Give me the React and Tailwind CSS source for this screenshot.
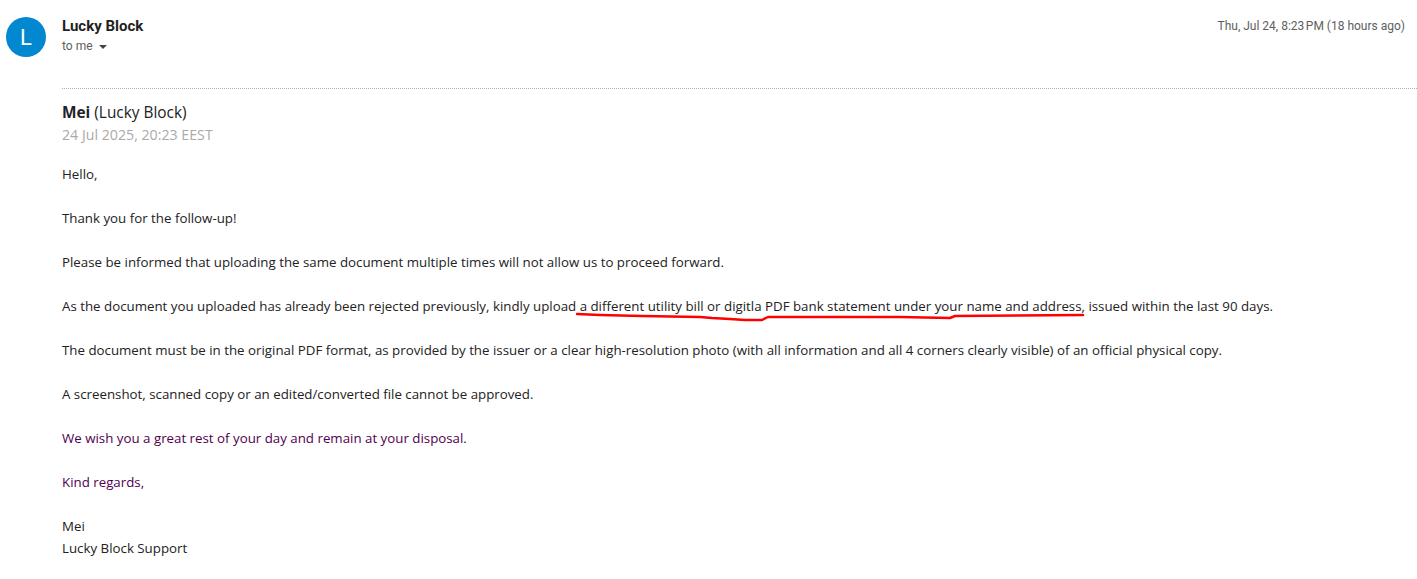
import React from "react";

export default function App() {
  const body = "font-['Open_Sans','Noto_Sans',sans-serif]";
  return (
    <div className="w-[1417px] h-[579px] bg-white overflow-hidden relative">
      <div className="flex pl-[6px] pr-[12px] pt-[17px]">
        <div className="w-10 h-10 rounded-full bg-[#0288d1] flex items-center justify-center text-white text-[22px] font-['Roboto',sans-serif] shrink-0">
          L
        </div>
        <div className="flex-1 ml-4 -mt-[1px]">
          <div className="flex justify-between">
            <div>
              <div className="text-[15px] leading-5 font-bold text-[#1f1f1f] font-['Roboto',sans-serif]">Lucky Block</div>
              <div className="flex items-center text-[12px] leading-5 text-[#5e5e5e] font-['Roboto',sans-serif]">
                to me
                <svg width="8" height="4" viewBox="0 0 8 4" className="ml-[6px] mt-[1px]">
                  <path d="M0 0 L8 0 L4 4 Z" fill="#444" />
                </svg>
              </div>
            </div>
            <div className="text-[12px] leading-5 text-[#5e5e5e] font-['Roboto',sans-serif]">
              Thu, Jul 24, 8:23&#8239;PM (18 hours ago)
            </div>
          </div>
        </div>
      </div>
      <div className="ml-[62px] mt-[31px] border-t border-dotted border-[#b0b0b0]" />
      <div className={`ml-[62px] mt-[14px] ${body}`}>
        <div className="text-[15.4px] leading-5 text-[#222]">
          <span className="font-bold">Mei</span> (Lucky Block)
        </div>
        <div className="text-[14.2px] leading-5 text-[#aaa] mt-[2px]">24 Jul 2025, 20:23 EEST</div>
        <div className="mt-[18px] text-[13.3px] leading-[22px] text-[#222] flex flex-col gap-[22px]">
          <p>Hello,</p>
          <p>Thank you for the follow-up!</p>
          <p>Please be informed that uploading the same document multiple times will not allow us to proceed forward.</p>
          <p>
            As the document you uploaded has already been rejected previously, kindly upload a different utility bill or digitla PDF bank statement under your name and address, issued within the last 90 days.
          </p>
          <p>
            The document must be in the original PDF format, as provided by the issuer or a clear high-resolution photo (with all information and all 4 corners clearly visible) of an official physical copy.
          </p>
          <p>A screenshot, scanned copy or an edited/converted file cannot be approved.</p>
          <p className="text-[#500050]">We wish you a great rest of your day and remain at your disposal.</p>
          <p className="text-[#500050]">Kind regards,</p>
          <p>
            Mei
            <br />
            Lucky Block Support
          </p>
        </div>
      </div>
      <svg className="absolute left-0 top-0 pointer-events-none" width="1417" height="579">
        <path
          d="M577 314 L600 315 L642 316 L700 317 L712 318 L730 319 L745 320 L762 320 L768 317 L900 317 L950 318 L955 316 L1083 315"
          stroke="#ff0000"
          strokeWidth="2.5"
          fill="none"
          strokeLinecap="round"
          strokeLinejoin="round"
        />
      </svg>
    </div>
  );
}
